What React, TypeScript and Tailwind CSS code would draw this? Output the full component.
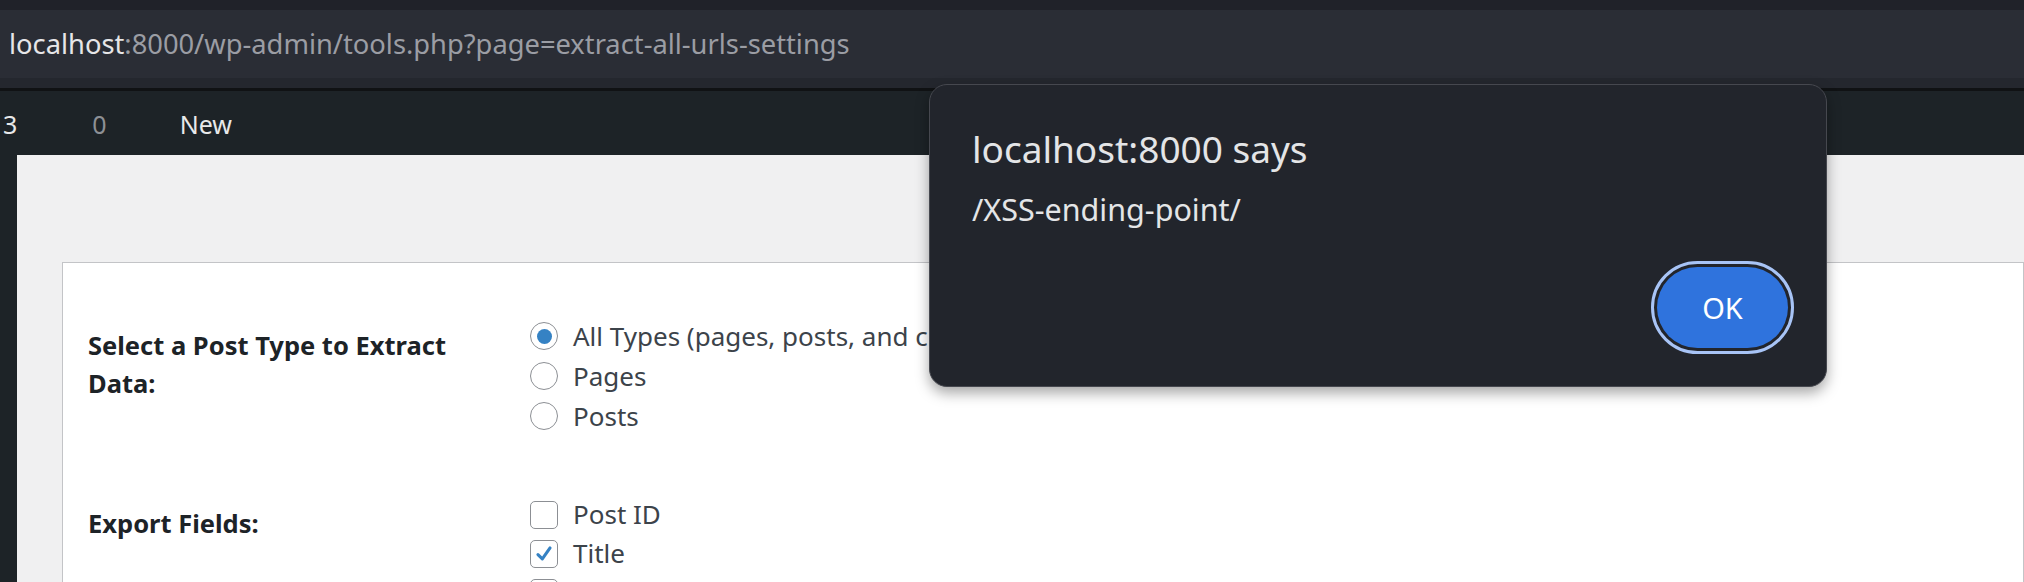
import React from "react";

const Radio = ({ checked, label }: { checked?: boolean; label: string }) => (
  <label className="flex h-[40px] items-center gap-[15px]">
    <span className="flex h-[28px] w-[28px] shrink-0 items-center justify-center rounded-full border-[1.5px] border-[#8c8f94] bg-white">
      {checked && <span className="h-[15px] w-[15px] rounded-full bg-[#3582c4]" />}
    </span>
    <span className="text-[26px] text-[#3c434a]">{label}</span>
  </label>
);

const Check = ({ checked, label }: { checked?: boolean; label: string }) => (
  <label className="flex h-[39px] items-center gap-[15px]">
    <span className="flex h-[28px] w-[28px] shrink-0 items-center justify-center rounded-[5px] border-[1.5px] border-[#8c8f94] bg-white">
      {checked && (
        <svg viewBox="0 0 20 20" className="h-[22px] w-[22px]">
          <path d="M4.5 10.5 L8.5 14.5 L15.5 4.5" fill="none" stroke="#3582c4" strokeWidth="2.8" strokeLinecap="round" strokeLinejoin="round" />
        </svg>
      )}
    </span>
    <span className="text-[26px] text-[#3c434a]">{label}</span>
  </label>
);

export default function App() {
  return (
    <div className="relative h-[582px] w-[2024px] overflow-hidden bg-[#f0f0f1] font-['Noto_Sans',sans-serif]">
      {/* browser chrome */}
      <div className="h-[10px] bg-[#202229]" />
      <div className="flex h-[68px] items-center bg-[#2a2d35] pl-[9px] text-[27.3px]">
        <span className="text-[#e6e6e8]">localhost</span>
        <span className="text-[#9b9da4]">:8000/wp-admin/tools.php?page=extract-all-urls-settings</span>
      </div>
      <div className="h-[10px] bg-[#24272e]" />
      <div className="h-[3px] bg-[#101214]" />

      {/* wp admin bar */}
      <div className="flex h-[64px] items-center bg-[#1d2327] pt-[4px] text-[25px]">
        <span className="ml-[3px] text-[#e8e9ea]">3</span>
        <span className="ml-[75px] text-[#8d9095]">0</span>
        <span className="ml-[73px] text-[#e8e9ea]">New</span>
      </div>

      <div className="flex">
        <div className="h-[430px] w-[17px] shrink-0 bg-[#1d2327]" />
        <div className="flex-1 pl-[45px] pt-[107px]">
          <div className="h-[400px] border border-[#c3c4c7] bg-white pl-[25px] pt-[53px]">
            <div className="flex">
              <div className="w-[442px] pt-[10px] text-[25.5px] font-bold leading-[38px] text-[#1d2327]">
                Select a Post Type to Extract
                <br />
                Data:
              </div>
              <div className="flex flex-col">
                <Radio checked label="All Types (pages, posts, and custom post types)" />
                <Radio label="Pages" />
                <Radio label="Posts" />
              </div>
            </div>
            <div className="mt-[59px] flex">
              <div className="w-[442px] pt-[9px] text-[25.5px] font-bold leading-[38px] text-[#1d2327]">
                Export Fields:
              </div>
              <div className="flex flex-col">
                <Check label="Post ID" />
                <Check checked label="Title" />
                <Check label="URL" />
              </div>
            </div>
          </div>
        </div>
      </div>

      {/* alert dialog */}
      <div className="absolute left-[929px] top-[84px] flex h-[303px] w-[898px] flex-col rounded-[18px] border border-[#46484f] bg-[#22252c] pl-[42px] pr-[32px] pt-[42px] shadow-[0_6px_14px_rgba(0,0,0,0.35)]">
        <div className="text-[37px] leading-[44px] text-[#e4e5e7]">localhost:8000 says</div>
        <div className="mt-[19px] text-[30.5px] leading-[38px] text-[#e4e5e7]">/XSS-ending-point/</div>
        <div className="mt-auto mb-[32px] flex justify-end">
          <button className="flex h-[93px] w-[143px] items-center justify-center rounded-full border-[3px] border-[#a8c4f6] p-[3px]">
            <span className="flex h-full w-full items-center justify-center rounded-full bg-[#2f73dd] text-[29px] text-white">
              OK
            </span>
          </button>
        </div>
      </div>
    </div>
  );
}
